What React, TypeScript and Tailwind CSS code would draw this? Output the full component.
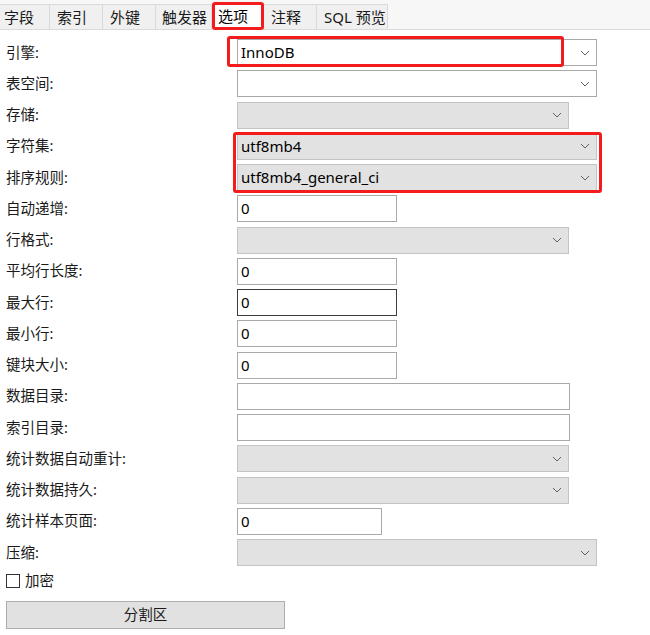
import React from 'react'

const font = { fontFamily: '"Noto Sans", "Noto Sans CJK SC", sans-serif' }

type Row =
  | { label: string; kind: 'combo'; value?: string; tone: 'white' | 'gray'; width: 'wide' | 'narrow' }
  | { label: string; kind: 'input'; value?: string; width: 'short' | 'mid' | 'long'; focused?: boolean }

const rows: Row[] = [
  { label: '引擎:', kind: 'combo', value: 'InnoDB', tone: 'white', width: 'wide' },
  { label: '表空间:', kind: 'combo', tone: 'white', width: 'wide' },
  { label: '存储:', kind: 'combo', tone: 'gray', width: 'narrow' },
  { label: '字符集:', kind: 'combo', value: 'utf8mb4', tone: 'gray', width: 'wide' },
  { label: '排序规则:', kind: 'combo', value: 'utf8mb4_general_ci', tone: 'gray', width: 'wide' },
  { label: '自动递增:', kind: 'input', value: '0', width: 'short' },
  { label: '行格式:', kind: 'combo', tone: 'gray', width: 'narrow' },
  { label: '平均行长度:', kind: 'input', value: '0', width: 'short' },
  { label: '最大行:', kind: 'input', value: '0', width: 'short', focused: true },
  { label: '最小行:', kind: 'input', value: '0', width: 'short' },
  { label: '键块大小:', kind: 'input', value: '0', width: 'short' },
  { label: '数据目录:', kind: 'input', width: 'long' },
  { label: '索引目录:', kind: 'input', width: 'long' },
  { label: '统计数据自动重计:', kind: 'combo', tone: 'gray', width: 'narrow' },
  { label: '统计数据持久:', kind: 'combo', tone: 'gray', width: 'narrow' },
  { label: '统计样本页面:', kind: 'input', value: '0', width: 'mid' },
  { label: '压缩:', kind: 'combo', tone: 'gray', width: 'wide' },
]

const tabs = [
  { name: '字段', w: 'w-[50px] pl-[4px]' },
  { name: '索引', w: 'w-[53px] pl-[7px]' },
  { name: '外键', w: 'w-[53px] pl-[7px]' },
  { name: '触发器', w: 'w-[56px] pl-[6px]' },
  { name: '选项', w: 'w-[51px] pl-[6px]', active: true },
  { name: '注释', w: 'w-[54px] pl-[8px]' },
  { name: 'SQL 预览', w: 'w-[71px] pl-[7px]' },
]

function Chevron() {
  return (
    <svg width="10" height="6" viewBox="0 0 10 6" className="shrink-0">
      <path d="M1 1 L5 5 L9 1" fill="none" stroke="#606060" strokeWidth="1" />
    </svg>
  )
}

function Combo({ value, tone, width }: { value?: string; tone: 'white' | 'gray'; width: 'wide' | 'narrow' }) {
  return (
    <div
      className={`flex h-[27px] items-center justify-between border pl-[3px] pr-[6px] ${
        width === 'wide' ? 'w-[360px]' : 'w-[332px]'
      } ${tone === 'white' ? 'border-[#a9a9a9] bg-white' : 'border-[#c4c4c4] bg-[#e2e2e2]'}`}
    >
      <span className="text-[15px] text-black leading-none">{value}</span>
      <Chevron />
    </div>
  )
}

function Input({ value, width, focused }: { value?: string; width: 'short' | 'mid' | 'long'; focused?: boolean }) {
  const w = width === 'short' ? 'w-[160px]' : width === 'mid' ? 'w-[145px]' : 'w-[333px]'
  return (
    <div
      className={`flex h-[27px] items-center border bg-white pl-[3px] ${w} ${
        focused ? 'border-[#3c3c3c]' : 'border-[#a9a9a9]'
      }`}
    >
      <span className="text-[15px] text-black leading-none">{value}</span>
    </div>
  )
}

export default function App() {
  return (
    <div className="relative h-[635px] w-[650px] overflow-hidden bg-white" style={font}>
      {/* tab strip */}
      <div className="flex h-[30px] items-end border-b border-[#dadada] bg-[#f7f7f7]">
        {tabs.map((t) =>
          t.active ? (
            <div
              key={t.name}
              className={`-mb-px flex h-[28px] items-center bg-white text-[15px] text-black ${t.w}`}
            >
              {t.name}
            </div>
          ) : (
            <div
              key={t.name}
              className={`flex h-[25px] items-center border-r border-t border-[#dadada] bg-[#f0f0f0] text-[15px] text-[#1a1a1a] ${t.w}`}
            >
              {t.name}
            </div>
          ),
        )}
      </div>

      {/* form */}
      <div className="flex flex-col gap-[4.25px] pl-[6px] pt-[9px]">
        {rows.map((r) => (
          <div key={r.label} className="flex h-[27px] items-center">
            <div className="w-[231px] text-[14.5px] text-[#1a1a1a]">{r.label}</div>
            {r.kind === 'combo' ? (
              <Combo value={r.value} tone={r.tone} width={r.width} />
            ) : (
              <Input value={r.value} width={r.width} focused={r.focused} />
            )}
          </div>
        ))}
        <div className="flex h-[22px] items-center gap-[5px]">
          <div className="h-[14px] w-[14px] border border-[#333] bg-white" />
          <span className="text-[14.5px] text-[#1a1a1a]">加密</span>
        </div>
        <div className="mt-[4px] flex h-[28px] w-[279px] items-center justify-center border border-[#adadad] bg-[#e1e1e1] text-[14.5px] text-[#1a1a1a]">
          分割区
        </div>
      </div>

      {/* red highlight annotations */}
      <div className="pointer-events-none absolute left-[212px] top-[2px] h-[28px] w-[52px] rounded-[3px] border-[3px] border-[#f31b1b]" />
      <div className="pointer-events-none absolute left-[227px] top-[36px] h-[31px] w-[337px] rounded-[3px] border-[3px] border-[#f31b1b]" />
      <div className="pointer-events-none absolute left-[233px] top-[132px] h-[61px] w-[369px] rounded-[3px] border-[3px] border-[#f31b1b]" />
    </div>
  )
}
